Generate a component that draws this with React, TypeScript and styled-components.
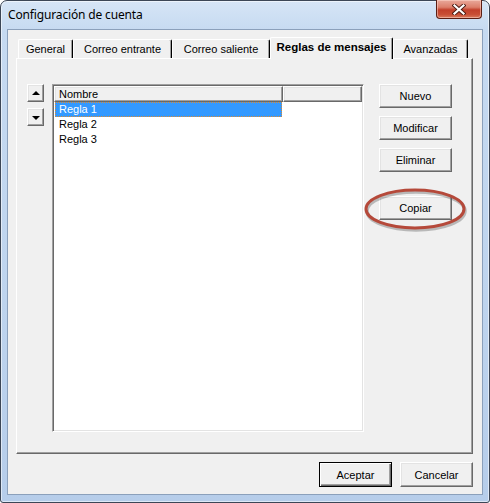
import React from "react";
import styled, { createGlobalStyle, css } from "styled-components";

const Global = createGlobalStyle`
  html, body { margin: 0; padding: 0; background: #ffffff; }
  body { font-family: "Liberation Sans", Arial, sans-serif; font-size: 11px; color: #000; }
  * { box-sizing: border-box; }
`;

const Window = styled.div`
  width: 490px;
  height: 503px;
  border: 1px solid #3c4656;
  border-radius: 7px 7px 3px 3px;
  background: linear-gradient(180deg, #d6e5f6 0%, #c6daf1 30px, #bed4ee 60%, #b6cdea 100%);
  padding: 0 6px 7px 6px;
  display: flex;
  flex-direction: column;
  box-shadow: inset 0 0 0 1px rgba(255, 255, 255, 0.55);
`;

const TitleBar = styled.div`
  height: 28px;
  display: flex;
  align-items: flex-start;
  justify-content: space-between;
`;

const TitleText = styled.div`
  padding: 6px 0 0 1px;
  font-family: "Noto Sans", "Open Sans", sans-serif;
  font-size: 12px;
  line-height: 16px;
  color: #000;
  letter-spacing: -0.15px;
`;

const CloseButton = styled.div`
  width: 46px;
  height: 19px;
  margin-top: -1px;
  margin-right: 1px;
  border: 1px solid #5b1e14;
  border-top: none;
  border-radius: 0 0 4px 4px;
  background: linear-gradient(180deg, #e9a99b 0%, #dc7f6b 40%, #c2402b 55%, #c84e35 80%, #d87a5d 100%);
  box-shadow: inset 0 0 0 1px rgba(255, 220, 210, 0.5);
  display: flex;
  align-items: center;
  justify-content: center;
`;

const Client = styled.div`
  width: 476px;
  height: 466px;
  border: 1px solid #8ba0bb;
  background: #f0f0f0;
  padding: 7px 9px 7px 8px;
  display: flex;
  flex-direction: column;
`;

const TabStrip = styled.div`
  height: 21px;
  padding-left: 2px;
  display: flex;
  align-items: flex-end;
  position: relative;
  z-index: 1;
`;

const Tab = styled.div<{ $active?: boolean; $w: number }>`
  width: ${(p) => p.$w}px;
  height: ${(p) => (p.$active ? 22 : 19)}px;
  border-top: 1px solid #ffffff;
  border-left: 1px solid #ffffff;
  border-right: 1px solid #000000;
  border-radius: 2px 2px 0 0;
  box-shadow: inset -1px 0 0 #a0a0a0;
  background: #f0f0f0;
  display: flex;
  align-items: center;
  justify-content: center;
  line-height: 13px;
  white-space: nowrap;
  ${(p) =>
    p.$active
      ? css`
          font-weight: bold;
          font-size: 11.5px;
          margin-bottom: -1px;
          padding-bottom: 2px;
        `
      : css`
          padding-top: 1px;
        `}
`;

const Panel = styled.div`
  width: 457px;
  height: 396px;
  border-top: 1px solid #ffffff;
  border-left: 1px solid #ffffff;
  border-right: 1px solid #696969;
  border-bottom: 1px solid #696969;
  box-shadow: inset -1px -1px 0 #a0a0a0;
  padding: 25px 0 0 10px;
  display: flex;
  align-items: flex-start;
`;

const ArrowColumn = styled.div`
  width: 17px;
  display: flex;
  flex-direction: column;
  gap: 6px;
  margin-right: 8px;
`;

const raised = css`
  background: #f0f0f0;
  border: 1px solid;
  border-color: #ffffff #696969 #696969 #ffffff;
  box-shadow: inset -1px -1px 0 #a0a0a0, inset 1px 1px 0 #e3e3e3;
`;

const ArrowButton = styled.div`
  ${raised};
  width: 17px;
  height: 18px;
  display: flex;
  align-items: center;
  justify-content: center;
`;

const Triangle = styled.div<{ $dir: "up" | "down" }>`
  width: 0;
  height: 0;
  border-left: 4px solid transparent;
  border-right: 4px solid transparent;
  ${(p) =>
    p.$dir === "up"
      ? css`
          border-bottom: 4px solid #000;
          margin-top: -1px;
        `
      : css`
          border-top: 4px solid #000;
          margin-top: 1px;
        `}
`;

const ListBox = styled.div`
  width: 312px;
  height: 348px;
  background: #ffffff;
  border: 1px solid;
  border-color: #a0a0a0 #ffffff #ffffff #a0a0a0;
  box-shadow: inset 1px 1px 0 #696969, inset -1px -1px 0 #e3e3e3;
  padding: 1px;
  display: flex;
  flex-direction: column;
`;

const HeaderRow = styled.div`
  height: 16px;
  display: flex;
  flex-shrink: 0;
`;

const HeaderCell = styled.div<{ $w?: number }>`
  ${raised};
  ${(p) => (p.$w ? `width: ${p.$w}px;` : "flex: 1;")}
  height: 16px;
  padding-left: 4px;
  line-height: 14px;
  white-space: nowrap;
`;

const Row = styled.div<{ $selected?: boolean }>`
  width: 227px;
  height: 15px;
  margin-left: 1px;
  padding-left: 3px;
  line-height: 13px;
  border: 1px solid transparent;
  white-space: nowrap;
  ${(p) =>
    p.$selected &&
    css`
      background: #3399ff;
      color: #ffffff;
      border: 1px dotted #d98a33;
    `}
`;

const ButtonColumn = styled.div`
  width: 73px;
  margin-left: 15px;
  display: flex;
  flex-direction: column;
  gap: 8px;
`;

const Button = styled.div<{ $w?: number; $h?: number; $default?: boolean }>`
  ${raised};
  width: ${(p) => p.$w ?? 73}px;
  height: ${(p) => p.$h ?? 24}px;
  display: flex;
  align-items: center;
  justify-content: center;
  white-space: nowrap;
  ${(p) =>
    p.$default &&
    css`
      border: 1px solid #000;
      box-shadow: inset 1px 1px 0 #ffffff, inset -1px -1px 0 #696969, inset -2px -2px 0 #a0a0a0;
    `}
`;

const Highlighted = styled.div`
  position: relative;
  margin-top: 16px;
`;

const Ring = styled.svg`
  position: absolute;
  left: -16px;
  top: -11px;
  width: 104px;
  height: 48px;
  overflow: visible;
  pointer-events: none;
`;

const Footer = styled.div`
  margin-top: 8px;
  display: flex;
  justify-content: flex-end;
  gap: 8px;
`;

export default function App() {
  const tabs = [
    { label: "General", w: 55 },
    { label: "Correo entrante", w: 99 },
    { label: "Correo saliente", w: 98 },
    { label: "Reglas de mensajes", w: 123, active: true },
    { label: "Avanzadas", w: 75 },
  ];
  const rules = ["Regla 1", "Regla 2", "Regla 3"];

  return (
    <>
      <Global />
      <Window>
        <TitleBar>
          <TitleText>Configuración de cuenta</TitleText>
          <CloseButton>
            <svg width="14" height="11" viewBox="0 0 14 11">
              <path d="M2.5 1.5 L11.5 9.5 M11.5 1.5 L2.5 9.5" stroke="#4a1a12" strokeWidth="4" strokeLinecap="square" />
              <path d="M2.5 1.5 L11.5 9.5 M11.5 1.5 L2.5 9.5" stroke="#ffffff" strokeWidth="2.2" strokeLinecap="square" />
            </svg>
          </CloseButton>
        </TitleBar>
        <Client>
          <TabStrip>
            {tabs.map((t) => (
              <Tab key={t.label} $w={t.w} $active={t.active}>
                {t.label}
              </Tab>
            ))}
          </TabStrip>
          <Panel>
            <ArrowColumn>
              <ArrowButton>
                <Triangle $dir="up" />
              </ArrowButton>
              <ArrowButton>
                <Triangle $dir="down" />
              </ArrowButton>
            </ArrowColumn>
            <ListBox>
              <HeaderRow>
                <HeaderCell $w={229}>Nombre</HeaderCell>
                <HeaderCell />
              </HeaderRow>
              {rules.map((r, i) => (
                <Row key={r} $selected={i === 0}>
                  {r}
                </Row>
              ))}
            </ListBox>
            <ButtonColumn>
              <Button>Nuevo</Button>
              <Button>Modificar</Button>
              <Button>Eliminar</Button>
              <Highlighted>
                <Button>Copiar</Button>
                <Ring viewBox="0 0 104 48">
                  <ellipse cx="53" cy="26" rx="49" ry="19" fill="none" stroke="rgba(80,80,80,0.35)" strokeWidth="3.5" />
                  <ellipse cx="52" cy="24" rx="49" ry="19" fill="none" stroke="#b5493a" strokeWidth="3" />
                </Ring>
              </Highlighted>
            </ButtonColumn>
          </Panel>
          <Footer>
            <Button $w={73} $h={25} $default>
              Aceptar
            </Button>
            <Button $w={73} $h={25}>
              Cancelar
            </Button>
          </Footer>
        </Client>
      </Window>
    </>
  );
}
